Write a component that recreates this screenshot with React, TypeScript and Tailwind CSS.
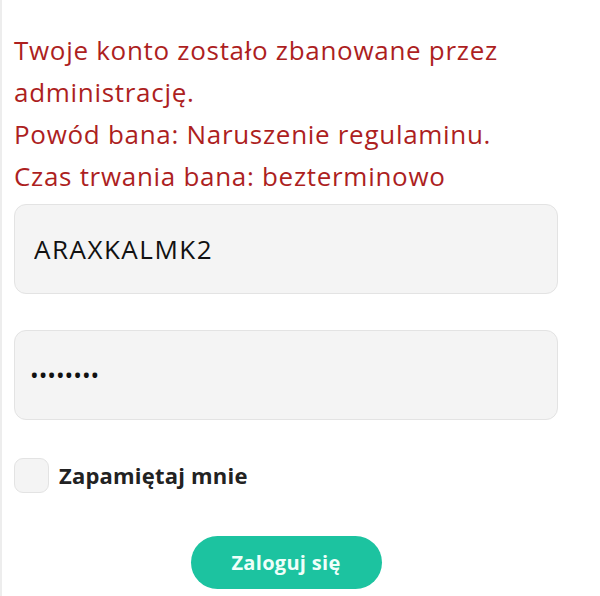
import React, { useState } from 'react';

export default function App() {
  const [login, setLogin] = useState('ARAXKALMK2');
  const [password, setPassword] = useState('12345678');
  const [remember, setRemember] = useState(false);

  return (
    <div className="min-h-[596px] w-[600px] bg-white border-l-2 border-[#ededed] font-['Open_Sans',sans-serif]">
      <div className="pl-[12px] pr-[42px] pt-[29px]">
        <div className="text-[#ad1f1f] text-[26px] leading-[42px] tracking-[0.7px]">
          <p>Twoje konto zostało zbanowane przez administrację.</p>
          <p>Powód bana: Naruszenie regulaminu.</p>
          <p>Czas trwania bana: bezterminowo</p>
        </div>

        <form className="mt-[7px] flex flex-col" onSubmit={(e) => e.preventDefault()}>
          <input
            value={login}
            onChange={(e) => setLogin(e.target.value)}
            className="h-[90px] w-full rounded-[12px] border border-[#e3e3e3] bg-[#f4f4f4] px-[19px] text-[26px] tracking-[1.5px] text-[#111] outline-none"
          />
          <input
            type="password"
            value={password}
            onChange={(e) => setPassword(e.target.value)}
            className="mt-[36px] h-[90px] w-full rounded-[12px] border border-[#e3e3e3] bg-[#f4f4f4] px-[15px] text-[23px] text-[#111] outline-none"
          />

          <label className="mt-[38px] flex items-center gap-[10px] cursor-pointer">
            <span
              onClick={() => setRemember(!remember)}
              className="h-[35px] w-[35px] rounded-[9px] border border-[#e3e3e3] bg-[#f4f4f4]"
            />
            <span className="text-[22px] font-bold tracking-[0.2px] text-[#222]">Zapamiętaj mnie</span>
          </label>

          <div className="mt-[43px] flex justify-center">
            <button
              type="submit"
              className="h-[53px] w-[191px] rounded-full bg-[#1cc3a0] text-[20px] font-bold tracking-[0.3px] text-[#effffa]"
            >
              Zaloguj się
            </button>
          </div>
        </form>
      </div>
    </div>
  );
}
